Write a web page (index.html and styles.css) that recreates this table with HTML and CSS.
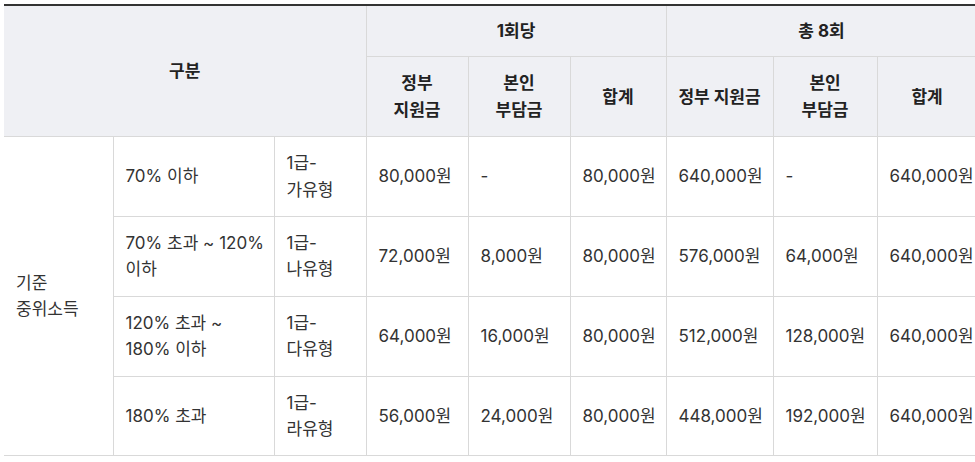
FILE: index.html
```html
<!DOCTYPE html>
<html lang="ko">
<head>
<meta charset="utf-8">
<title>지원금 표</title>
<link rel="stylesheet" href="styles.css">
</head>
<body>
<div class="wrap">
<table class="fee">
  <colgroup>
    <col class="c1"><col class="c2"><col class="c3">
    <col class="c4"><col class="c5"><col class="c6">
    <col class="c7"><col class="c8"><col class="c9">
  </colgroup>
  <thead>
    <tr class="h1">
      <th rowspan="2" colspan="3" class="first">구분</th>
      <th colspan="3">1회당</th>
      <th colspan="3">총 8회</th>
    </tr>
    <tr class="h2">
      <th>정부 지원금</th>
      <th>본인 부담금</th>
      <th>합계</th>
      <th class="nowrap">정부 지원금</th>
      <th>본인 부담금</th>
      <th>합계</th>
    </tr>
  </thead>
  <tbody>
    <tr>
      <td rowspan="4" class="first">기준 중위소득</td>
      <td class="range">70% 이하</td>
      <td>1급-가유형</td>
      <td>80,000원</td>
      <td>-</td>
      <td>80,000원</td>
      <td>640,000원</td>
      <td>-</td>
      <td>640,000원</td>
    </tr>
    <tr>
      <td class="range">70% 초과 ~ 120%<br>이하</td>
      <td>1급-나유형</td>
      <td>72,000원</td>
      <td>8,000원</td>
      <td>80,000원</td>
      <td>576,000원</td>
      <td>64,000원</td>
      <td>640,000원</td>
    </tr>
    <tr>
      <td class="range">120% 초과 ~<br>180% 이하</td>
      <td>1급-다유형</td>
      <td>64,000원</td>
      <td>16,000원</td>
      <td>80,000원</td>
      <td>512,000원</td>
      <td>128,000원</td>
      <td>640,000원</td>
    </tr>
    <tr>
      <td class="range">180% 초과</td>
      <td>1급-라유형</td>
      <td>56,000원</td>
      <td>24,000원</td>
      <td>80,000원</td>
      <td>448,000원</td>
      <td>192,000원</td>
      <td>640,000원</td>
    </tr>
  </tbody>
</table>
</div>
</body>
</html>
```

FILE: styles.css
```css
html, body {
  margin: 0;
  padding: 0;
  background: #ffffff;
}

.wrap {
  padding: 4px 0 0 4px;
  width: 1000px;
}

.fee {
  border-collapse: collapse;
  table-layout: fixed;
  width: 973px;
  border-top: 2px solid #333333;
  font-family: Inter, "Noto Sans CJK KR", sans-serif;
  font-size: 17px;
  line-height: 26.4px;
  color: #333333;
  word-break: keep-all;
}

.c1 { width: 109px; }
.c2 { width: 161px; }
.c3 { width: 92px; }
.c4 { width: 102px; }
.c5 { width: 102px; }
.c6 { width: 96px; }
.c7 { width: 107px; }
.c8 { width: 104px; }
.c9 { width: 100px; }

.fee th,
.fee td {
  border: 1px solid #d9d9d9;
  padding: 13px 12px;
  vertical-align: middle;
}

.fee th:first-child,
.fee td.first {
  border-left: none;
}

.fee th {
  background: #eff0f4;
  color: #222222;
  font-weight: 700;
  text-align: center;
}

.fee .h1 th {
  padding-top: 12px;
  padding-bottom: 12px;
}

.fee td {
  text-align: left;
}

.fee td.range {
  white-space: nowrap;
  padding-right: 4px;
}

.fee .nowrap {
  white-space: nowrap;
  padding-left: 8px;
  padding-right: 8px;
}
```
